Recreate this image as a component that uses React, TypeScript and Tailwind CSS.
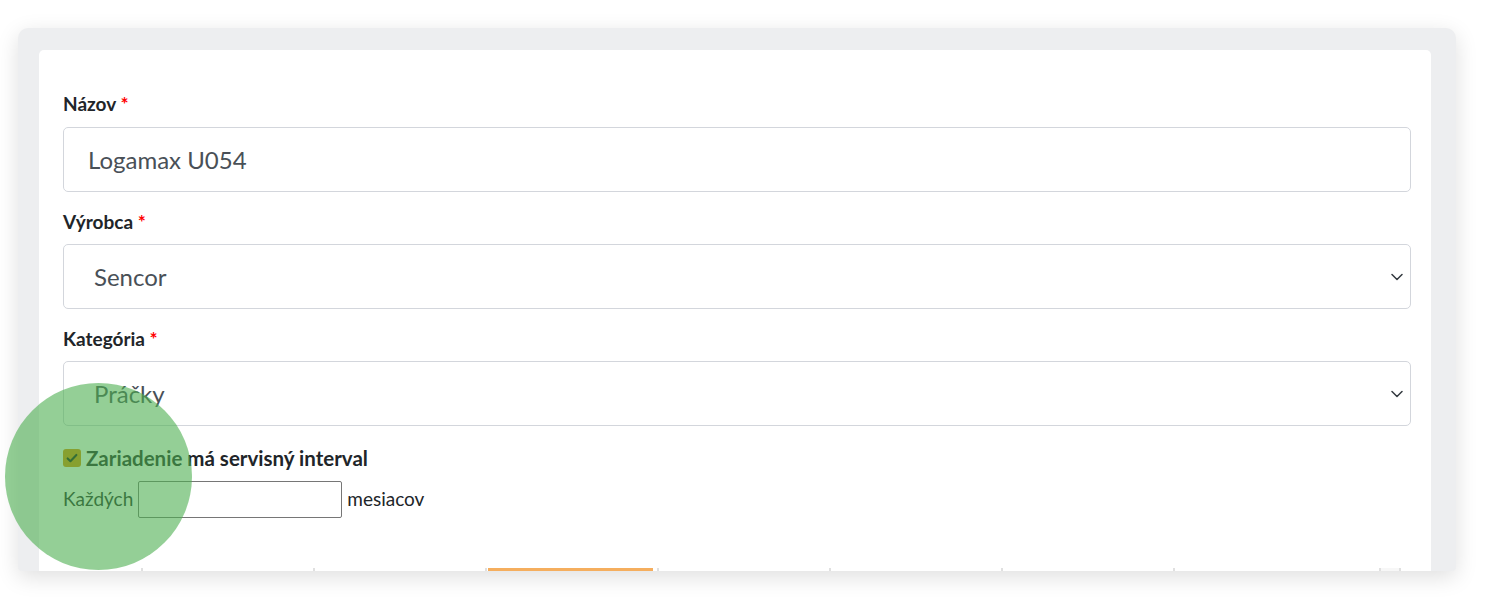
const font = { fontFamily: 'Lato, "Open Sans", sans-serif' }

function Label({ children }: { children: React.ReactNode }) {
  return (
    <p className="text-[19px] leading-[28px] font-bold text-[#212529]">
      {children} <span className="text-[#ff0000]">*</span>
    </p>
  )
}

function SelectBox({ value }: { value: string }) {
  return (
    <div className="flex items-center justify-between h-[65px] border border-[#d3d6dc] rounded-[5px] pl-[30px] pr-[7px] text-[24px] text-[#495057]">
      <span>{value}</span>
      <svg viewBox="0 0 12 8" className="w-[12px] h-[8px]">
        <path d="M1 1.5l5 5 5-5" fill="none" stroke="#343a40" strokeWidth="1.5" strokeLinecap="round" strokeLinejoin="round" />
      </svg>
    </div>
  )
}

const tabs = [0, 1, 2, 3, 4, 5, 6]

export default function App() {
  return (
    <div className="w-[1500px] h-[606px] bg-white relative overflow-hidden" style={font}>
      {/* panel */}
      <div className="ml-[18px] mt-[28px] w-[1438px] h-[543px] bg-[#edeef0] rounded-t-[10px] rounded-b-[4px] shadow-[0_6px_22px_rgba(0,0,0,0.13)] overflow-hidden pt-[22px] pl-[21px]">
        <div className="w-[1392px] h-[521px] bg-white rounded-t-[5px] pt-[40px] pl-[24px] pr-[20px] overflow-hidden">
          <Label>Názov</Label>
          <div className="mt-[9px] flex items-center h-[65px] border border-[#d3d6dc] rounded-[5px] pl-[24px] text-[24px] text-[#495057]">
            Logamax U054
          </div>

          <div className="mt-[16px]">
            <Label>Výrobca</Label>
          </div>
          <div className="mt-[8px]">
            <SelectBox value="Sencor" />
          </div>

          <div className="mt-[16px]">
            <Label>Kategória</Label>
          </div>
          <div className="mt-[8px]">
            <SelectBox value="Práčky" />
          </div>

          <label className="mt-[18px] flex items-center gap-[5px] text-[20.5px] leading-[28px] font-bold text-[#212529]">
            <span className="w-[18px] h-[18px] rounded-[3px] bg-[#df8900] flex items-center justify-center">
              <svg viewBox="0 0 16 16" className="w-[14px] h-[14px]">
                <path d="M3 8.5l3.2 3.2L13 4.5" fill="none" stroke="#111" strokeWidth="2.4" strokeLinecap="round" strokeLinejoin="round" />
              </svg>
            </span>
            Zariadenie má servisný interval
          </label>

          <div className="mt-[9px] flex items-center gap-[5px] text-[19px] text-[#212529]">
            <span>Každých</span>
            <input className="w-[204px] h-[37px] border border-[#767676] rounded-[2px] outline-none" />
            <span>mesiacov</span>
          </div>

          {/* tab row, cut off by the panel edge */}
          <div className="mt-[50px] flex">
            <div className="w-[78px]" />
            {tabs.map((t) => (
              <div key={t} className="w-[172px] h-[30px] border-l-2 border-[#e0e0e0] pl-[1px] pr-[4px]">
                {t === 2 && <div className="h-[3px] bg-[#f5ae5e]" />}
              </div>
            ))}
            <div className="ml-[34px] w-[22px] h-[30px] border-x-2 border-[#e0e0e0] bg-[#f7f7f7]" />
          </div>
        </div>
      </div>

      {/* click indicator */}
      <div className="absolute left-[5px] top-[383px] w-[187px] h-[187px] rounded-full bg-[#4caf50]/60 pointer-events-none" />
    </div>
  )
}
